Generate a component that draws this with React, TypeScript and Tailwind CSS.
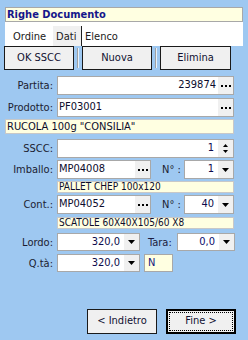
import React from "react";

function Dots() {
  return (
    <div className="w-[15px] self-stretch bg-[#f0f0f0] flex items-center justify-center gap-[2px]">
      <span className="w-[2px] h-[2px] bg-black" />
      <span className="w-[2px] h-[2px] bg-black" />
      <span className="w-[2px] h-[2px] bg-black" />
    </div>
  );
}

function Arrow() {
  return (
    <div className="w-[15px] self-stretch bg-[#f0f0f0] flex items-center justify-center">
      <svg width="7" height="4" viewBox="0 0 7 4">
        <polygon points="0,0 7,0 3.5,4" fill="#000" />
      </svg>
    </div>
  );
}

function Spin() {
  return (
    <div className="w-[15px] self-stretch bg-[#f0f0f0] flex flex-col items-center justify-center gap-[3px]">
      <svg width="5" height="3" viewBox="0 0 5 3">
        <polygon points="2.5,0 5,3 0,3" fill="#000" />
      </svg>
      <svg width="5" height="3" viewBox="0 0 5 3">
        <polygon points="0,0 5,0 2.5,3" fill="#000" />
      </svg>
    </div>
  );
}

function Label({ children, w = "w-[53px]" }: { children: React.ReactNode; w?: string }) {
  return <div className={`${w} shrink-0 text-right text-[11px] text-[#1c1c30] leading-none`}>{children}</div>;
}

export default function App() {
  return (
    <div className="w-[248px] h-[340px] bg-[#9ec8f1] font-['DejaVu_Sans_Condensed','DejaVu_Sans',sans-serif] flex flex-col overflow-hidden">
      {/* title */}
      <div className="mt-[7px] mx-[5px] h-[15px] bg-[#ffffe1] border border-[#a8a8a8] flex items-center pl-[1px]">
        <span className="text-[11px] font-bold text-[#16168a] leading-none">Righe Documento</span>
      </div>
      {/* tabs */}
      <div className="mx-[5px] h-[24px] bg-white flex items-end">
        <div className="h-[20px] flex items-center pl-[8px] pr-[7px] text-[11px] text-[#202020] leading-none">Ordine</div>
        <div className="h-[20px] flex items-center px-[3px] bg-[#f0f0f0] text-[11px] text-[#202020] leading-none w-[28px]">Dati</div>
        <div className="h-[20px] w-px bg-[#202020]" />
        <div className="h-[20px] flex items-center pl-[3px] text-[11px] text-[#202020] leading-none">Elenco</div>
      </div>
      {/* buttons */}
      <div className="h-[24px] flex items-stretch pl-[4px]">
        <div className="w-[70px] border border-[#1a1a1a] bg-[#f0f0f0] flex items-center justify-center text-[11px] text-[#101030]">OK SSCC</div>
        <div className="mx-[3px] my-[2px] w-[2px] border-l border-[#a0a0a0] border-r border-r-[#e8f2fc]" />
        <div className="w-[70px] border border-[#1a1a1a] bg-[#f0f0f0] flex items-center justify-center text-[11px] text-[#101030] ml-[0px]">Nuova</div>
        <div className="mx-[3px] my-[2px] w-[2px] border-l border-[#a0a0a0] border-r border-r-[#e8f2fc]" />
        <div className="w-[71px] border border-[#1a1a1a] bg-[#f0f0f0] flex items-center justify-center text-[11px] text-[#101030]">Elimina</div>
      </div>

      {/* Partita */}
      <div className="mt-[6px] flex items-center">
        <Label>Partita:</Label>
        <div className="ml-[4px] w-[177px] h-[19px] border border-[#a8a8a8] bg-white flex items-stretch">
          <div className="flex-1 flex items-center justify-end pr-[2px] text-[11px] text-[#0c0c2c]">239874</div>
          <Dots />
        </div>
      </div>
      {/* Prodotto */}
      <div className="mt-[3px] flex items-center">
        <Label>Prodotto:</Label>
        <div className="ml-[4px] w-[177px] h-[19px] border border-[#a8a8a8] bg-white flex items-stretch">
          <div className="flex-1 flex items-center pl-[1px] text-[11px] text-[#0c0c2c]">PF03001</div>
          <Dots />
        </div>
      </div>
      {/* descr */}
      <div className="mt-[2px] ml-[5px] w-[229px] h-[15px] bg-[#ffffe1] border border-[#c8c8c8] flex items-center pl-[1px] text-[11px] text-[#0c0c2c] leading-none">
        RUCOLA 100g "CONSILIA"
      </div>
      {/* SSCC */}
      <div className="mt-[5px] flex items-center">
        <Label>SSCC:</Label>
        <div className="ml-[4px] w-[177px] h-[19px] border border-[#a8a8a8] bg-white flex items-stretch">
          <div className="flex-1 flex items-center justify-end pr-[4px] text-[11px] text-[#0c0c4c]">1</div>
          <Spin />
        </div>
      </div>
      {/* Imballo */}
      <div className="mt-[2px] flex items-center">
        <Label>Imballo:</Label>
        <div className="ml-[4px] w-[94px] h-[19px] border border-[#a8a8a8] bg-white flex items-stretch">
          <div className="flex-1 flex items-center pl-[1px] text-[11px] text-[#0c0c2c]">MP04008</div>
          <Dots />
        </div>
        <div className="ml-[11px] w-[22px] text-[11px] text-[#1c1c30] leading-none">N° :</div>
        <div className="ml-[0px] w-[50px] h-[19px] border border-[#a8a8a8] bg-white flex items-stretch">
          <div className="flex-1 flex items-center justify-end pr-[4px] text-[11px] text-[#0c0c4c]">1</div>
          <Arrow />
        </div>
      </div>
      {/* pallet descr */}
      <div className="mt-[2px] ml-[57px] w-[177px] h-[12px] bg-[#ffffe1] border border-[#c8c8c8] flex items-center pl-[1px] text-[10px] text-[#0c0c2c] leading-none">
        PALLET CHEP 100x120
      </div>
      {/* Cont */}
      <div className="mt-[2px] flex items-center">
        <Label>Cont.:</Label>
        <div className="ml-[4px] w-[94px] h-[19px] border border-[#a8a8a8] bg-white flex items-stretch">
          <div className="flex-1 flex items-center pl-[1px] text-[11px] text-[#0c0c2c]">MP04052</div>
          <Dots />
        </div>
        <div className="ml-[11px] w-[22px] text-[11px] text-[#1c1c30] leading-none">N° :</div>
        <div className="w-[50px] h-[19px] border border-[#a8a8a8] bg-white flex items-stretch">
          <div className="flex-1 flex items-center justify-end pr-[4px] text-[11px] text-[#0c0c4c]">40</div>
          <Arrow />
        </div>
      </div>
      {/* scatole descr */}
      <div className="mt-[3px] ml-[57px] w-[177px] h-[12px] bg-[#ffffe1] border border-[#c8c8c8] flex items-center pl-[1px] text-[10px] text-[#0c0c2c] leading-none">
        SCATOLE 60X40X105/60 X8
      </div>
      {/* Lordo / Tara */}
      <div className="mt-[4px] flex items-center">
        <Label>Lordo:</Label>
        <div className="ml-[4px] w-[83px] h-[18px] border border-[#a8a8a8] bg-white flex items-stretch">
          <div className="flex-1 flex items-center justify-end pr-[4px] text-[11px] text-[#0c0c4c]">320,0</div>
          <Arrow />
        </div>
        <div className="ml-[8px] w-[29px] text-[11px] text-[#1c1c40] leading-none">Tara:</div>
        <div className="w-[58px] h-[18px] border border-[#a8a8a8] bg-white flex items-stretch">
          <div className="flex-1 flex items-center justify-end pr-[4px] text-[11px] text-[#0c0c6c]">0,0</div>
          <Arrow />
        </div>
      </div>
      {/* Qta */}
      <div className="mt-[3px] flex items-center">
        <Label>Q.tà:</Label>
        <div className="ml-[4px] w-[83px] h-[18px] border border-[#a8a8a8] bg-white flex items-stretch">
          <div className="flex-1 flex items-center justify-end pr-[4px] text-[11px] text-[#0c0c4c]">320,0</div>
          <Arrow />
        </div>
        <div className="ml-[4px] w-[29px] h-[18px] border border-[#a8a8a8] bg-[#ffffe1] flex items-center pl-[3px] text-[11px] text-[#14147c]">N</div>
      </div>

      {/* bottom buttons */}
      <div className="mt-[37px] flex items-stretch h-[25px] pl-[87px]">
        <div className="w-[70px] border border-[#1a1a1a] bg-[#f0f0f0] flex items-center justify-center text-[11px] text-[#101030]">&lt; Indietro</div>
        <div className="ml-[9px] w-[70px] border-2 border-black bg-[#f0f0f0] p-[1px] flex">
          <div className="flex-1 border border-dotted border-black flex items-center justify-center text-[11px] text-[#101030]">Fine &gt;</div>
        </div>
      </div>
    </div>
  );
}
